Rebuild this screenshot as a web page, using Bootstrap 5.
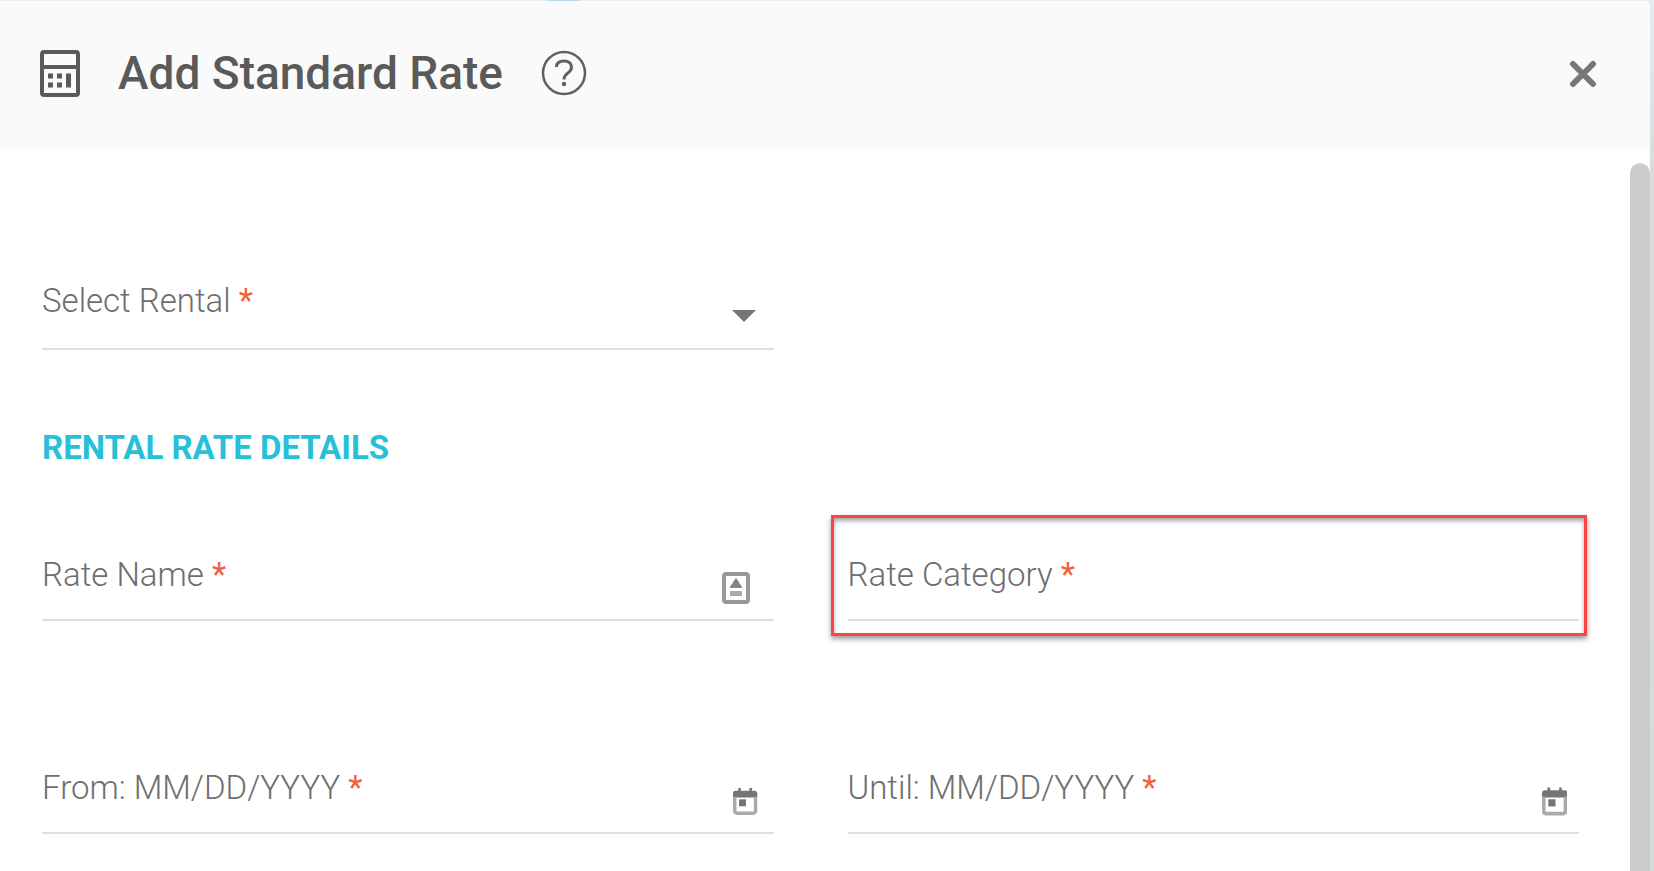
<!DOCTYPE html>
<html lang="en">
<head>
<meta charset="utf-8">
<meta name="viewport" content="width=device-width, initial-scale=1">
<title>Add Standard Rate</title>
<link href="https://cdn.jsdelivr.net/npm/bootstrap@5.3.0/dist/css/bootstrap.min.css" rel="stylesheet">
<style>
  body { font-family: Roboto, "Liberation Sans", sans-serif; color: #6e6e6e; }
  .backdrop-page { padding: 1px 4px 0 0; background: linear-gradient(90deg, transparent 33%, #b5e0ea 33%, #b5e0ea 35%, transparent 35%) top / 100% 1px no-repeat, linear-gradient(#e6ecef, #d9dbdc 20%, #d9dbdc 70%, #d3dcdb); }
  .rate-dialog { border-top-right-radius: 5px; overflow: hidden; }
  .dialog-head { background: #fafafa; height: 148px; padding: 0 53px 4px 40px; }
  .dialog-title { font-size: 46px; line-height: 56px; font-weight: 500; color: #5a5a5a; margin: 0 0 0 38px; }
  .help-btn { margin-left: 38px; }
  .form-area { padding: 132px 51px 32px 42px; }
  .field-row { --bs-gutter-x: 74px; }
  .field { border-bottom: 2px solid #e0e0e0; padding-bottom: 24px; }
  .field-select { padding-bottom: 27px; }
  .field label { font-size: 33px; line-height: 40px; font-weight: 300; white-space: nowrap; }
  .field label span { color: #f4603c; font-weight: 400; }
  .field input, .field select { min-width: 0; height: 40px; border: 0; outline: 0; background: transparent; appearance: none; font-size: 33px; color: #555; }
  .field svg { margin-bottom: -9px; }
  .field .caret { margin: 0 17px -1px 0; }
  .field .cal-end { margin-right: 12px; }
  .section-title { font-size: 33px; line-height: 40px; font-weight: 700; color: #26c0d8; margin: 78px 0 87px; }
  .callout { position: absolute; inset: -40px -8px -17px -17px; border: 3px solid #fb4545; box-shadow: 0 3px 5px rgba(0,0,0,.4), inset 0 3px 4px rgba(0,0,0,.35); pointer-events: none; }
  .date-row { margin-top: 147px; }
  .scroll-track { width: 20px; padding-top: 14px; }
  .scroll-thumb { background: #cbcbcb; border-radius: 10px 10px 0 0; }
</style>
</head>
<body>
<div class="backdrop-page min-vh-100 d-flex">
  <main class="rate-dialog bg-white flex-grow-1 d-flex flex-column">
    <header class="dialog-head d-flex align-items-center">
      <svg width="40" height="47" viewBox="0 0 40 47" fill="none" stroke="#5a5a5a" aria-hidden="true">
        <rect x="2" y="2" width="36" height="43" rx="2" stroke-width="4"/>
        <path d="M2 17h36" stroke-width="4"/>
        <path d="M8 26h5m4 0h5M8 35h5m4 0h5" stroke-width="5"/>
        <path d="M28.500 23.500v14" stroke-width="5"/>
      </svg>
      <h1 class="dialog-title">Add Standard Rate</h1>
      <button type="button" class="help-btn btn p-0 border-0 d-flex" aria-label="Help">
        <svg width="46" height="46" viewBox="0 0 46 46" fill="none" stroke="#606060" stroke-width="3">
          <circle cx="23" cy="23" r="21" stroke-width="2.500"/>
          <path d="M15.500 17c0-4 3-6 7.500-6s7.500 2.500 7.500 6.500c0 5.500-7.500 5.500-7.500 12"/>
          <circle cx="23" cy="34" r="2.200" fill="#606060" stroke="none"/>
        </svg>
      </button>
      <button type="button" class="btn p-0 border-0 d-flex ms-auto" aria-label="Close">
        <svg width="28" height="30" viewBox="0 0 28 30" stroke="#777" stroke-width="6" stroke-linecap="round"><path d="M4 6l20 20M24 6L4 26"/></svg>
      </button>
    </header>
    <div class="d-flex flex-grow-1">
      <form class="form-area flex-grow-1">
        <div class="row field-row">
          <div class="col-6">
            <div class="field field-select d-flex align-items-end">
              <label for="rental">Select Rental <span>*</span></label>
              <select id="rental" class="flex-grow-1" required><option value=""></option></select>
              <svg class="caret" width="26" height="12" viewBox="0 0 26 12" fill="#757575" aria-hidden="true"><path d="M1 0h24L13 12z"/></svg>
            </div>
          </div>
        </div>
        <h2 class="section-title">RENTAL RATE DETAILS</h2>
        <div class="row field-row">
          <div class="col-6">
            <div class="field d-flex align-items-end">
              <label for="rateName">Rate Name <span>*</span></label>
              <input id="rateName" type="text" class="flex-grow-1" required>
              <svg class="me-4" width="28" height="32" viewBox="0 0 28 32" fill="#999" aria-hidden="true">
                <rect x="2" y="2" width="24" height="28" rx="2" fill="none" stroke="#999" stroke-width="4"/>
                <path d="M14 6l3 4c0 2 3 3 3 6H8c0-3 3-4 3-6z" fill="#858585"/><path d="M8 19h12v5H8z" fill="#aaa"/>
              </svg>
            </div>
          </div>
          <div class="col-6">
            <div class="field d-flex align-items-end position-relative">
              <label for="rateCategory">Rate Category <span>*</span></label>
              <input id="rateCategory" type="text" class="flex-grow-1" required>
              <div class="callout"></div>
            </div>
          </div>
        </div>
        <div class="row field-row date-row">
          <div class="col-6">
            <div class="field d-flex align-items-end">
              <label for="fromDate">From: MM/DD/YYYY <span>*</span></label>
              <input id="fromDate" type="text" class="flex-grow-1" required>
              <svg class="me-3" width="28" height="31" viewBox="0 0 28 31" fill="#757575" aria-hidden="true">
                <path d="M6 0h3v4H6zM19 0h3v4h-3zM3 3h22q3 0 3 3v5H0V6q0-3 3-3z"/>
                <path d="M2 10v16q0 3 3 3h18q3 0 3-3V10" fill="none" stroke="#aaa" stroke-width="4"/><path d="M7 13h8v8H7z"/>
              </svg>
            </div>
          </div>
          <div class="col-6">
            <div class="field d-flex align-items-end">
              <label for="untilDate">Until: MM/DD/YYYY <span>*</span></label>
              <input id="untilDate" type="text" class="flex-grow-1" required>
              <svg class="cal-end" width="28" height="31" viewBox="0 0 28 31" fill="#757575" aria-hidden="true">
                <path d="M6 0h3v4H6zM19 0h3v4h-3zM3 3h22q3 0 3 3v5H0V6q0-3 3-3z"/>
                <path d="M2 10v16q0 3 3 3h18q3 0 3-3V10" fill="none" stroke="#aaa" stroke-width="4"/><path d="M7 13h8v8H7z"/>
              </svg>
            </div>
          </div>
        </div>
      </form>
      <div class="scroll-track d-flex flex-shrink-0" aria-hidden="true"><div class="scroll-thumb w-100"></div></div>
    </div>
  </main>
</div>
<script src="https://cdn.jsdelivr.net/npm/bootstrap@5.3.0/dist/js/bootstrap.bundle.min.js"></script>
</body>
</html>
